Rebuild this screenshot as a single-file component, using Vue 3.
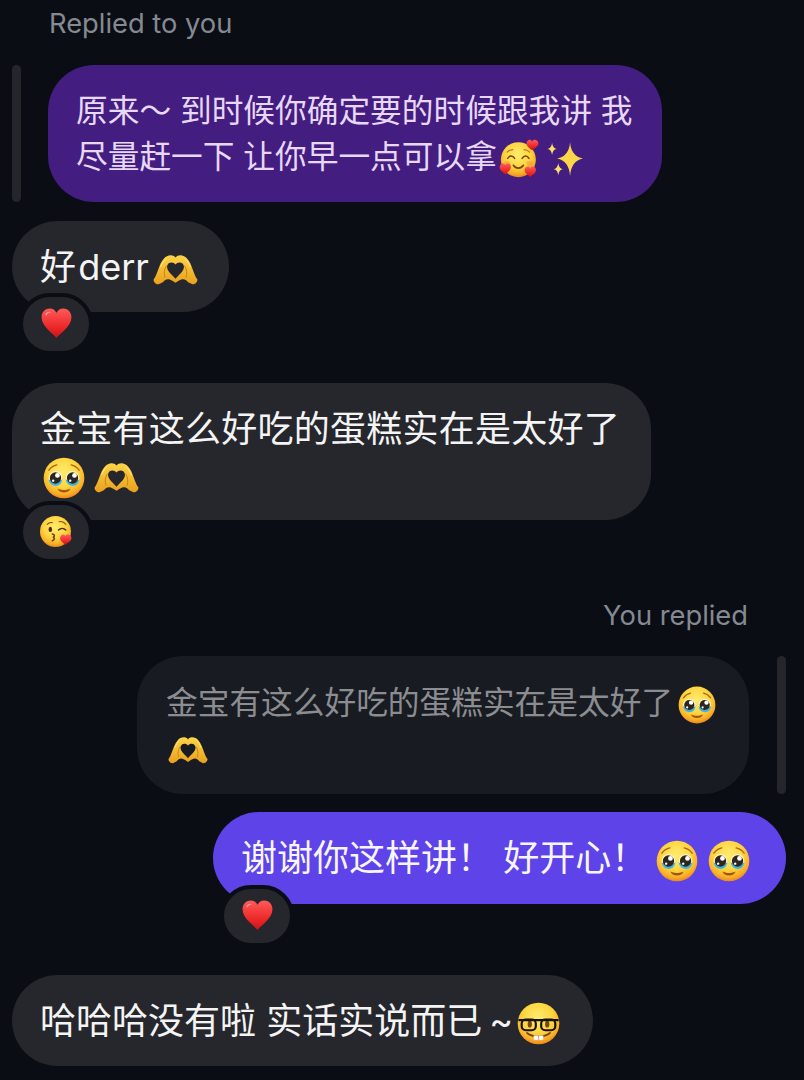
<template>
  <main class="chat">
    <svg class="sprite" aria-hidden="true">
      <defs>
        <radialGradient id="face" cx="48%" cy="36%" r="66%">
          <stop offset="0" stop-color="#ffec70" />
          <stop offset="0.55" stop-color="#fed53f" />
          <stop offset="0.82" stop-color="#f9ae28" />
          <stop offset="1" stop-color="#e8801a" />
        </radialGradient>
        <linearGradient id="red" x1="0" y1="0" x2="0" y2="1">
          <stop offset="0" stop-color="#ff5a5a" />
          <stop offset="0.6" stop-color="#ee2a2a" />
          <stop offset="1" stop-color="#c9141c" />
        </linearGradient>
        <linearGradient id="gold" x1="0" y1="0" x2="0" y2="1">
          <stop offset="0" stop-color="#fdd448" />
          <stop offset="1" stop-color="#e9a01c" />
        </linearGradient>
        <symbol id="heart" viewBox="0 0 64 64">
          <path d="M32 60C26 52 3 38 3 20 3 9 11 3 19 3c6 0 10 3 13 8 3-5 7-8 13-8 8 0 16 6 16 17 0 18-23 32-29 40Z" fill="url(#red)" />
          <path d="M10 14c3-5 9-6 13-4-5 0-9 2-11 7Z" fill="#ff9a9a" />
        </symbol>
        <symbol id="hands" viewBox="0 0 64 44">
          <path fill-rule="evenodd" d="M1 36C6 30 9 13 15 7 20 1 28 0 32 5c4-5 12-4 17 2 6 6 9 23 14 29 1 3-3 8-7 7l-6-3c-3-3-5-5-9-4-3 1-6 3-9 5-3-2-6-4-9-5-4-1-6 1-9 4l-6 3c-4 1-8-4-7-7ZM32 15c-3-5-12-4-12 3 0 7 7 11 12 17 5-6 12-10 12-17 0-7-9-8-12-3Z" fill="url(#gold)" />
          <path d="M17 33c-2-6-1-11 2-16M47 33c2-6 1-11-2-16" fill="none" stroke="#c2820f" stroke-width="1.4" stroke-linecap="round" />
          <path d="M18 7c-2 2-5 6-7 11M46 7c2 2 5 6 7 11" fill="none" stroke="#ffe98a" stroke-width="1.4" stroke-linecap="round" />
        </symbol>
        <symbol id="plead" viewBox="0 0 64 64">
          <circle cx="32" cy="32" r="31" fill="url(#face)" />
          <path d="M9 20c3-4 7-7 12-8M55 20c-3-4-7-7-12-8" fill="none" stroke="#a9661a" stroke-width="2.2" stroke-linecap="round" />
          <circle cx="19" cy="32" r="10.5" fill="#fff4c8" />
          <circle cx="45" cy="32" r="10.5" fill="#fff4c8" />
          <path d="M8.500 34c1 7 6 10 11 10s9-3 10-10c-4 3-17 3-21 0ZM34.500 34c1 7 6 10 11 10s9-3 10-10c-4 3-17 3-21 0Z" fill="#3fb4e0" />
          <circle cx="19" cy="32" r="8.600" fill="#2f2520" />
          <circle cx="45" cy="32" r="8.600" fill="#2f2520" />
          <circle cx="22" cy="28" r="3.600" fill="#fff" />
          <circle cx="48" cy="28" r="3.600" fill="#fff" />
          <circle cx="15.500" cy="36" r="1.800" fill="#fff" />
          <circle cx="41.500" cy="36" r="1.800" fill="#fff" />
          <path d="M22 48c6 3 14 3 20 0-2 8-18 8-20 0Z" fill="#a3560f" />
        </symbol>
        <symbol id="kiss" viewBox="0 0 64 64">
          <circle cx="30" cy="32" r="30" fill="url(#face)" />
          <path d="M14 18c3-3 7-4 10-3M37 13c5-1 10 1 13 5" fill="none" stroke="#8a4c10" stroke-width="2.200" stroke-linecap="round" />
          <ellipse cx="20" cy="28" rx="3.400" ry="5" fill="#4a2a10" />
          <path d="M36 29c4-4 10-4 14 0" fill="none" stroke="#4a2a10" stroke-width="2.800" stroke-linecap="round" />
          <path d="M24 37c5 1 5 5 1 6 4 1 4 5-1 7" fill="none" stroke="#6b3a0e" stroke-width="3" stroke-linecap="round" />
          <path d="M49 58c-3-4-10-7-10-13 0-4 3-7 6-7 2 0 3 1 4 3 1-2 3-3 5-3 4 0 7 3 7 7 0 6-9 9-12 13Z" fill="url(#red)" />
        </symbol>
        <symbol id="love" viewBox="0 0 64 64">
          <circle cx="31" cy="33" r="28" fill="url(#face)" />
          <path d="M14 31c3-5 8-5 11 0M37 31c3-5 8-5 11 0" fill="none" stroke="#7a4410" stroke-width="2.400" stroke-linecap="round" />
          <path d="M13 21c3-3 6-4 9-4M40 17c3 0 6 1 9 4" fill="none" stroke="#b9761f" stroke-width="1.800" stroke-linecap="round" />
          <path d="M23 42c4 6 12 6 16 0" fill="none" stroke="#7a4410" stroke-width="2.600" stroke-linecap="round" />
          <ellipse cx="13" cy="39" rx="5" ry="3.500" fill="#f58a4a" opacity=".5" />
          <ellipse cx="49" cy="39" rx="5" ry="3.500" fill="#f58a4a" opacity=".5" />
          <path d="M53 18c-3-3-9-6-9-11 0-4 3-6 5-6 2 0 3 1 4 3 1-2 2-3 4-3 3 0 6 2 6 6 0 5-7 8-10 11Z" fill="url(#red)" />
          <path d="M10 57C7 53 1 50 1 45c0-4 3-6 5-6 2 0 3 1 4 3 1-2 2-3 4-3 3 0 5 2 5 6 0 5-6 8-9 12Z" fill="url(#red)" />
          <path d="M50 61c-3-4-9-6-9-11 0-4 3-6 5-6 2 0 3 1 4 3 1-2 2-3 4-3 3 0 5 2 5 6 0 5-6 7-9 11Z" fill="url(#red)" />
        </symbol>
        <symbol id="sparkle" viewBox="0 0 64 64">
          <path d="M41 2Q43 27 64 31 43 35 41 62 39 35 18 31 39 27 41 2Z" fill="#fcd54a" />
          <path d="M9 3Q10 13 17 14 10 15 9 25 8 15 1 14 8 13 9 3Z" fill="#fde06a" />
          <path d="M20 39Q21 49 28 50 21 51 20 61 19 51 12 50 19 49 20 39Z" fill="#fde06a" />
        </symbol>
        <symbol id="nerd" viewBox="0 0 64 64">
          <circle cx="32" cy="32" r="31" fill="url(#face)" />
          <ellipse cx="19" cy="33" rx="3.200" ry="5" fill="#7a4410" />
          <ellipse cx="45" cy="33" rx="3.200" ry="5" fill="#7a4410" />
          <path d="M2 27h60" stroke="#15110c" stroke-width="3.200" />
          <rect x="7" y="26" width="21" height="16" rx="6" fill="none" stroke="#15110c" stroke-width="3.200" />
          <rect x="36" y="26" width="21" height="16" rx="6" fill="none" stroke="#15110c" stroke-width="3.200" />
          <path d="M15 46c9 7 25 7 34 0" fill="none" stroke="#7a4410" stroke-width="2.800" stroke-linecap="round" />
          <path d="M25 50h6.500v6.500H25ZM32.500 50H39v6.500h-6.500Z" fill="#fff" stroke="#d8bd8c" stroke-width=".6" />
        </symbol>
      </defs>
    </svg>

    <p class="label label--in">Replied to you</p>
    <div class="reply">
      <span class="bar"></span>
      <div class="bubble bubble--purple">
        原来～ 到时候你确定要的时候跟我讲 我<br />尽量赶一下 让你早一点可以拿<svg class="emoji love"><use href="#love" /></svg><svg class="emoji sparkle"><use href="#sparkle" /></svg>
      </div>
    </div>

    <div class="bubble bubble--grey first">
      好 derr<svg class="emoji hands"><use href="#hands" /></svg>
      <span class="reaction"><svg class="emoji-r"><use href="#heart" /></svg></span>
    </div>

    <div class="bubble bubble--grey second">
      <span class="wide">金宝有这么好吃的蛋糕实在是太好了</span><br /><svg class="emoji plead"><use href="#plead" /></svg> <svg class="emoji hands pair"><use href="#hands" /></svg>
      <span class="reaction"><svg class="emoji-r"><use href="#kiss" /></svg></span>
    </div>

    <p class="label label--out">You replied</p>
    <div class="reply reply--out">
      <div class="bubble bubble--dim">
        金宝有这么好吃的蛋糕实在是太好了<svg class="emoji plead-s"><use href="#plead" /></svg><br /><svg class="emoji hands-s"><use href="#hands" /></svg>
      </div>
      <span class="bar"></span>
    </div>

    <div class="bubble bubble--blue">
      谢谢你这样讲！ 好开心！ <svg class="emoji plead tight"><use href="#plead" /></svg> <svg class="emoji plead tail"><use href="#plead" /></svg>
      <span class="reaction"><svg class="emoji-r"><use href="#heart" /></svg></span>
    </div>

    <div class="bubble bubble--grey last">
      哈哈哈没有啦 实话实说而已<span class="tilde">~</span><svg class="emoji nerd"><use href="#nerd" /></svg>
    </div>
  </main>
</template>

<script setup>
</script>

<style>
html, body { background: #0a0d14; }
</style>

<style scoped>
.chat {
  width: 804px;
  height: 1080px;
  box-sizing: border-box;
  padding: 9px 18px 0 12px;
  display: flex;
  flex-direction: column;
  overflow: hidden;
  background: #0a0d14;
  font-family: Inter, "Noto Sans CJK SC", sans-serif;
}
.sprite { position: absolute; width: 0; height: 0; }
.label {
  margin: 0;
  font: 400 27.3px/30px Inter, sans-serif;
  color: #858a92;
  flex: none;
}
.label--in { margin: 0 0 26px 37px; }
.label--out { margin: 81px 38px 25px 0; align-self: flex-end; }
.reply { display: flex; gap: 27px; flex: none; }
.reply--out { justify-content: flex-end; gap: 28px; }
.bar { width: 9px; border-radius: 5px; background: #24262b; flex: none; }
.bubble {
  position: relative;
  width: fit-content;
  box-sizing: border-box;
  flex: none;
  padding: 22.5px 28px;
  border-radius: 46px;
  font-size: 36px;
  line-height: 46px;
  white-space: nowrap;
  color: #f4f4f5;
}
.bubble--purple {
  width: 614px;
  font-size: 31.7px;
  background: #431d80;
  color: #e6d8f6;
}
.bubble--grey { background: #25272c; }
.first { width: 217px; margin-top: 19px; word-spacing: -8px; }
.second { width: 639px; margin-top: 71px; }
.wide { letter-spacing: 0.25px; }
.last { width: 581px; margin-top: 71px; }
.tilde { margin: 0 4px 0 7px; }
.bubble--dim {
  width: 612px;
  font-size: 31.7px;
  padding: 24px 29px;
  line-height: 45px;
  background: #181b21;
  color: #8b8d91;
}
.bubble--blue {
  width: 573px;
  margin-top: 18px;
  align-self: flex-end;
  background: #5e43e8;
  color: #f7f6ff;
  padding: 23px 28px;
}
.reaction {
  position: absolute;
  left: 7px;
  bottom: -43px;
  box-sizing: border-box;
  width: 74px;
  height: 62px;
  padding-bottom: 2px;
  border: 4px solid #0a0d14;
  border-radius: 31px;
  background: #25272c;
  display: flex;
  align-items: center;
  justify-content: center;
}
.bubble--blue .reaction { left: 7px; bottom: -43px; }
.emoji { display: inline-block; vertical-align: middle; margin-block: -8px; }
.emoji-r { width: 33px; height: 33px; }
.hands { width: 45px; height: 31px; margin-left: 4px; }
.pair { margin-left: -1px; }
.hands-s { width: 40px; height: 28px; margin-left: 2px; }
.plead { width: 42px; height: 42px; margin-left: 3px; }
.tight { margin-left: -1px; }
.tail { margin-left: 0; }
.plead-s { width: 38px; height: 38px; margin-left: 5px; }
.love { width: 40px; height: 40px; margin-left: 2px; }
.sparkle { width: 36px; height: 36px; margin-left: 8px; }
.nerd { width: 43px; height: 43px; }
</style>
